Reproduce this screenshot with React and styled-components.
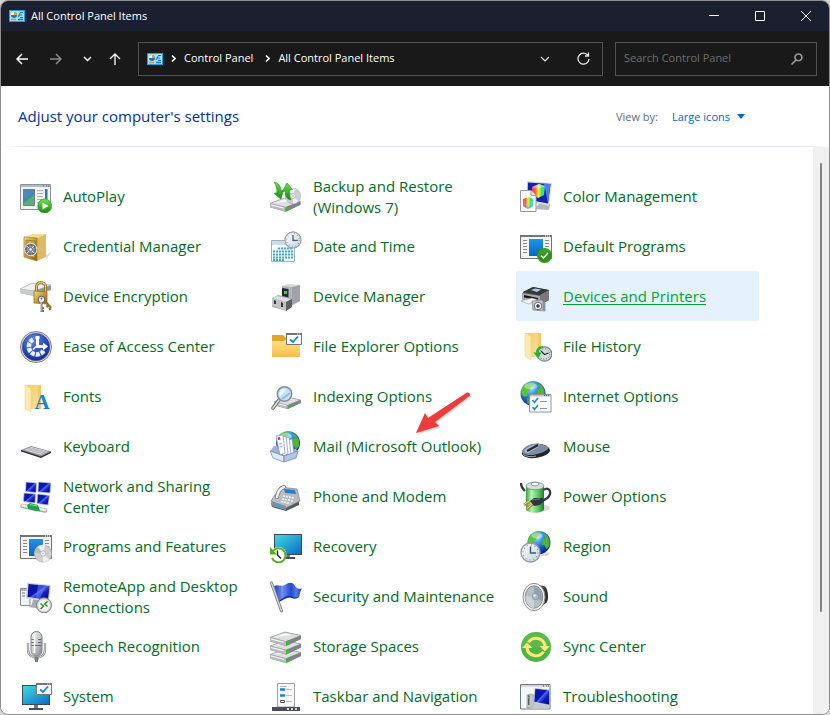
import React from "react";
import styled, { createGlobalStyle } from "styled-components";

function Defs() {
  return (
    <DefsSvg aria-hidden="true">
      <defs>
        <linearGradient id="screen" x1="0" y1="0" x2="1" y2="1">
          <stop offset="0" stopColor="#0a1a8c" />
          <stop offset="0.45" stopColor="#0d16b4" />
          <stop offset="0.5" stopColor="#4a6cf0" />
          <stop offset="0.65" stopColor="#1420c8" />
          <stop offset="1" stopColor="#02085e" />
        </linearGradient>
        <linearGradient id="teal" x1="0" y1="0" x2="1" y2="1">
          <stop offset="0" stopColor="#3fdbe3" />
          <stop offset="1" stopColor="#0a6cc4" />
        </linearGradient>
        <linearGradient id="blue" x1="0" y1="0" x2="0" y2="1">
          <stop offset="0" stopColor="#1e95e6" />
          <stop offset="1" stopColor="#0868bd" />
        </linearGradient>
        <linearGradient id="metal" x1="0" y1="0" x2="1" y2="1">
          <stop offset="0" stopColor="#f6f6f8" />
          <stop offset="0.5" stopColor="#c9cbcf" />
          <stop offset="1" stopColor="#7d8086" />
        </linearGradient>
        <linearGradient id="folder" x1="0" y1="0" x2="0" y2="1">
          <stop offset="0" stopColor="#ffe28a" />
          <stop offset="1" stopColor="#f3c04a" />
        </linearGradient>
        <linearGradient id="oldFolder" x1="0" y1="0" x2="1" y2="1">
          <stop offset="0" stopColor="#f3cd68" />
          <stop offset="1" stopColor="#fbe39a" />
        </linearGradient>
        <linearGradient id="gold" x1="0" y1="0" x2="1" y2="1">
          <stop offset="0" stopColor="#f2dc8c" />
          <stop offset="0.5" stopColor="#c79b35" />
          <stop offset="1" stopColor="#8c6518" />
        </linearGradient>
        <linearGradient id="green" x1="0" y1="0" x2="0" y2="1">
          <stop offset="0" stopColor="#6fe04c" />
          <stop offset="1" stopColor="#168a12" />
        </linearGradient>
        <linearGradient id="battery" x1="0" y1="0" x2="1" y2="0">
          <stop offset="0" stopColor="#3f9c46" />
          <stop offset="0.3" stopColor="#b4f5ae" />
          <stop offset="0.7" stopColor="#55c95a" />
          <stop offset="1" stopColor="#1f7a34" />
        </linearGradient>
        <linearGradient id="cube" x1="0" y1="0" x2="1" y2="0">
          <stop offset="0" stopColor="#ff2fd0" />
          <stop offset="0.25" stopColor="#ff5a2c" />
          <stop offset="0.5" stopColor="#fff03a" />
          <stop offset="0.75" stopColor="#3ce84c" />
          <stop offset="1" stopColor="#2ad8f0" />
        </linearGradient>
        <linearGradient id="shade" x1="0" y1="0" x2="0" y2="1">
          <stop offset="0.3" stopColor="#ffffff" stopOpacity="0" />
          <stop offset="1" stopColor="#1a6cff" stopOpacity="0.5" />
        </linearGradient>
        <linearGradient id="flagBlue" x1="0" y1="0" x2="1" y2="0">
          <stop offset="0" stopColor="#1c3ab0" />
          <stop offset="0.3" stopColor="#6f92f2" />
          <stop offset="0.6" stopColor="#2748cc" />
          <stop offset="0.8" stopColor="#5478ea" />
          <stop offset="1" stopColor="#1b38ac" />
        </linearGradient>
        <radialGradient id="globe" cx="0.38" cy="0.25" r="0.8">
          <stop offset="0" stopColor="#c4ecff" />
          <stop offset="0.35" stopColor="#3e9be6" />
          <stop offset="0.75" stopColor="#1242b4" />
          <stop offset="1" stopColor="#0a1f70" />
        </radialGradient>
        <radialGradient id="access" cx="0.4" cy="0.25" r="0.8">
          <stop offset="0" stopColor="#5f86ee" />
          <stop offset="0.6" stopColor="#2748bd" />
          <stop offset="1" stopColor="#152a85" />
        </radialGradient>
        <linearGradient id="face" x1="0" y1="0" x2="1" y2="1">
          <stop offset="0" stopColor="#ffffff" />
          <stop offset="1" stopColor="#c3d2dd" />
        </linearGradient>
        <linearGradient id="dark" x1="0" y1="0" x2="1" y2="0">
          <stop offset="0" stopColor="#7a7a7a" />
          <stop offset="1" stopColor="#232323" />
        </linearGradient>
      </defs>
    </DefsSvg>
  );
}

/* pieces shared by several icons */

const Globe = ({ cx, cy, r }) => (
  <g transform={`translate(${cx} ${cy}) scale(${r / 12})`}>
    <circle r="12" fill="url(#globe)" />
    <path d="M-10-6C-8-9-4-11-1-11L1-8-2-6-3-3-6-1-5 2-8 3-11 1C-12-2-11-5-10-6Z" fill="#5cc336" />
    <path d="M3-10 8-8 11-3 11 3 8 7 6 3 3 2 4-3 7-5Z" fill="#4fb52f" />
    <path d="M-6 4-1 5 1 8-2 11.500-6 9Z" fill="#3fa32a" />
    <ellipse cx="-2" cy="-7" rx="6" ry="3" fill="#fff" opacity="0.4" />
  </g>
);

const Clock = ({ cx, cy, r }) => (
  <g transform={`translate(${cx} ${cy}) scale(${r / 10})`}>
    <circle r="9.500" fill="url(#face)" stroke="#8e9ba6" strokeWidth="1.300" />
    <circle r="7.500" fill="none" stroke="#8496a5" strokeDasharray="1 2.927" strokeWidth="1.200" />
    <path d="M0-6V.5H5.500" fill="none" stroke="#3c5a70" strokeWidth="1.500" />
  </g>
);

const Disc = ({ cx, cy, r }) => (
  <g transform={`translate(${cx} ${cy}) scale(${r / 9})`}>
    <circle r="8.700" fill="#cfcfd1" stroke="#a9a9ab" strokeWidth="0.600" />
    <path d="M0 0-5-7A8.600 8.600 0 0 1 2-8.400ZM0 0 6 6A8.600 8.600 0 0 1 0 8.600Z" fill="#f0f0f0" />
    <path d="M0 0-8.500-1A8.600 8.600 0 0 1-5.500-6.500Z" fill="#b7b9bc" />
    <circle r="2.700" fill="#fff" stroke="#b4b4b4" />
    <circle r="1" fill="#bdbdbd" />
  </g>
);

const Drive = ({ x = 0, y = 0, s = 1 }) => (
  <g transform={`translate(${x} ${y}) scale(${s})`}>
    <path d="M0 5.500 15 0 31 3.500V7L16 14 0 9.500Z" fill="#787a7f" />
    <path d="M0 5.500 15 0 31 3.500 16 9.500Z" fill="#dedfe2" stroke="#9a9ba0" strokeWidth="0.700" />
    <path d="M3 5.300 15 1.500 22 3Z" fill="#f8f8f9" />
    <path d="M0 5.500 16 9.500V14L0 9.500Z" fill="#b9babf" />
    <path d="M16 9.500 31 3.500V7L16 14Z" fill="#808288" />
    <path d="M16 10 19 9V12L16 13.500Z" fill="#2fc520" />
    <path d="M1 7 14 10.300" stroke="#fff" strokeWidth="1" />
  </g>
);

const ProgramWindow = () => (
  <g>
    <path d="M.5 4.500H31.500V27.500H.5Z" fill="#f4f4f4" stroke="#747474" />
    <path d="M0 4H32V6H0Z" fill="#747474" />
    <path d="M25 5H26M27 5H28M29 5H30" stroke="#fff" />
    <path d="M3 9.500H7M3 12.500H7M3 15.500H7M3 18.500H7M3 21.500H7M25 9.500H29M25 12.500H29M25 15.500H29" stroke="#8a8a8a" />
    <path d="M9 8H23V25H9Z" fill="url(#blue)" />
  </g>
);

const CheckWindow = () => (
  <g>
    <path d="M16.500 2.500H31.500V13.500H16.500Z" fill="#fbfbfb" stroke="#747474" />
    <path d="M16 2H32V4H16Z" fill="#747474" />
    <path d="M27 3H28M29 3H30" stroke="#fff" strokeWidth="0.800" />
    <path d="M20 8.500 23 11 28 5.500" fill="none" stroke="#1685dd" strokeWidth="1.800" />
  </g>
);

const OldFolder = ({ y = 0 }) => (
  <g transform={`translate(0 ${y})`}>
    <path d="M6 2H21V26H9Z" fill="url(#oldFolder)" />
    <path d="M18 2H21V26H18Z" fill="#f1cb66" />
    <path d="M5 2 11 5.500V29L5 25.500Z" fill="#fdeab0" stroke="#edcf7e" strokeWidth="0.500" />
  </g>
);

/* one 32px drawing for each item of the list */

const icons = {
  autoplay: (
    <>
      <path d="M.5 3.500H30.500V28.500H.5Z" fill="#f1f3f5" stroke="#8a929b" />
      <path d="M1 4H30V6H1Z" fill="#b3bac2" />
      <path d="M23 5H24M26 5H27M28 5H29" stroke="#4c5661" strokeWidth="1" />
      <path d="M3.500 8.500H14.500V24.500H3.500Z" fill="#3d8fa0" stroke="#6c7e8a" />
      <path d="M4 9H14L4 18Z" fill="#4c86c4" />
      <path d="M4 22 14 14V24H4Z" fill="#5dab7d" />
      <path d="M17 9.500H23M17 12.500H23M17 15.500H23M17 18.500H22M17 21.500H20" stroke="#a9b0b8" />
      <path d="M25 8H27.500V18H25Z" fill="#3878a8" />
      <circle cx="24.700" cy="25" r="7" fill="url(#green)" stroke="#2b9c20" strokeWidth="0.700" />
      <path d="M22.500 21.500 28.500 25 22.500 28.500Z" fill="#fff" />
    </>
  ),
  safe: (
    <>
      <path d="M26 24 31 21 26 29Z" fill="#dcdcdc" />
      <path d="M4 6 12 3H26L17 7Z" fill="#f0dd9a" />
      <path d="M17 7 26 3V26L17 30Z" fill="#dcbb62" />
      <path d="M4 6 17 7V30L4 26Z" fill="url(#gold)" stroke="#9e7a2c" strokeWidth="0.700" />
      <path d="M6 9 15 10V27L6 24Z" fill="#c9a448" stroke="#8f6d22" strokeWidth="0.700" />
      <circle cx="10.700" cy="18.500" r="6.300" fill="#8c8f94" stroke="#dfe2e6" />
      <circle cx="10.700" cy="18.500" r="4.500" fill="none" stroke="#5f636a" strokeWidth="1.400" strokeDasharray="2.200 1.200" />
      <path d="M7 15 14 22M14 15 7 22" stroke="#fff" strokeWidth="0.900" />
      <circle cx="10.700" cy="18.500" r="1.800" fill="#e8eaec" stroke="#5b5f64" strokeWidth="0.700" />
    </>
  ),
  encryption: (
    <>
      <path d="M0 8 12 2 31 4V9L14 15 0 12Z" fill="#92949a" />
      <path d="M0 8 12 2 31 4 14 10Z" fill="#f1f1f3" stroke="#acadb1" strokeWidth="0.600" />
      <path d="M0 8 14 10V15L0 12Z" fill="#cbccd1" />
      <path d="M16.500 12V6C16.500 0 25.500 0 25.500 6V12" fill="none" stroke="#8f6a25" strokeWidth="3" />
      <path d="M16.500 12V6C16.500 0 25.500 0 25.500 6V12" fill="none" stroke="#dec474" strokeWidth="1.300" />
      <path d="M14 10 27 11V23L14 22Z" fill="url(#gold)" stroke="#91691b" strokeWidth="0.700" />
      <path d="M24 19 31 27M28.500 24.500 26.500 26M31 27 29 28.500" stroke="#9b7227" strokeWidth="2.300" />
      <circle cx="21.500" cy="18.500" r="3.200" fill="#ececef" stroke="#66696f" strokeWidth="1.100" />
      <circle cx="21.500" cy="17.500" r="1" fill="#66696f" />
      <path d="M21.500 21V31M21.500 27H24M21.500 30H24" stroke="#74777d" strokeWidth="2" />
      <path d="M21 21V30" stroke="#f3f3f3" strokeWidth="0.700" />
    </>
  ),
  access: (
    <>
      <circle cx="16" cy="16" r="15.500" fill="#e9ebee" stroke="#77797e" />
      <circle cx="16" cy="16" r="13.800" fill="url(#access)" stroke="#4d5670" strokeWidth="0.700" />
      <path d="M13 8.500A8 8 0 1 0 24 19" fill="none" stroke="#e9effc" strokeWidth="4.600" strokeDasharray="4 1" />
      <path d="M17.500 16V6M16 15.500H26" stroke="#fff" strokeWidth="3" />
      <path d="M15.500 5H19.500V8H15.500ZM23 11.500 28 15.500 23 19.500Z" fill="#fff" />
      <path d="M13 18.500 16 15.500" stroke="#fff" strokeWidth="1.500" />
    </>
  ),
  fonts: (
    <>
      <OldFolder y={2} />
      <text x="22" y="28" textAnchor="middle" fontFamily="Liberation Serif, serif" fontSize="21" fontWeight="bold" fill="#1583cf">
        A
      </text>
    </>
  ),
  keyboard: (
    <>
      <path d="M1 19 1 20.500 21 27 31 22 31 20.500Z" fill="#2f3338" />
      <path d="M1 19 11 15 31 20.500 21 25.500Z" fill="#8c9299" />
      <path d="M4 19 11.500 16 28 20.500 21 24Z" fill="#d6dade" />
      <path d="M6.500 18 23.500 23M9 17 26 21.700M8 20 15 17M12 21.200 19 18M16 22.400 23 19M20 23.500 26 20.200" stroke="#9aa1a8" strokeWidth="0.500" />
    </>
  ),
  network: (
    <>
      <path d="M6 1 16.500 2 16 11.500 5.500 10.500Z" fill="url(#screen)" stroke="#b8c4e4" strokeWidth="0.700" />
      <path d="M18.500 1 31 2 30 12 18 11Z" fill="url(#screen)" stroke="#b8c4e4" strokeWidth="0.700" />
      <path d="M4 12 15.500 13 15 22 3.500 20.500Z" fill="url(#screen)" stroke="#b8c4e4" strokeWidth="0.700" />
      <path d="M17.500 13 29.500 14.500 28 24 17 22.500Z" fill="url(#screen)" stroke="#b8c4e4" strokeWidth="0.700" />
      <path d="M2.500 25 25 29.500" stroke="#a4b3a8" strokeWidth="4.500" strokeLinecap="round" />
      <path d="M2.500 24.500 25 29" stroke="#e9efea" strokeWidth="2.500" strokeLinecap="round" />
      <path d="M7 24 10 22 18 24 20 30 16 30 8 28Z" fill="#1fa348" />
      <path d="M10 23.500 17 25" stroke="#7ee09a" strokeWidth="1.200" />
    </>
  ),
  programs: (
    <>
      <ProgramWindow />
      <Disc cx={23} cy={22.5} r={9} />
    </>
  ),
  remote: (
    <>
      <path d="M.5 7.500H10V24.500H.5Z" fill="#f2f2f2" stroke="#8a8a8a" />
      <path d="M1 9H9M2 12H5M2 15H5" stroke="#777" />
      <path d="M13 18 12 23 9 26 22 28 24 20Z" fill="#a9acb2" />
      <path d="M7 1.500 31 4 29 20.500 6 17.500Z" fill="#d3d6dc" />
      <path d="M8.500 3 29.500 5 28 18.800 7.500 16Z" fill="url(#screen)" />
      <path d="M18 4 26 4.700 20 17.500 16 17Z" fill="#7088f5" opacity="0.500" />
      <circle cx="24" cy="24.300" r="7.500" fill="#d8d8d8" stroke="#7b7b7b" />
      <circle cx="24" cy="24.300" r="5.500" fill="#f7f7f7" />
      <path d="M20.500 22.500 23.500 25 20.500 28M27.500 20.500 24.700 23 27.500 25.500" fill="none" stroke="#2c8c2c" strokeWidth="1.500" />
    </>
  ),
  speech: (
    <>
      <path d="M8 12V19C8 29 25 29 25 19V12" fill="none" stroke="#7a7b84" strokeWidth="2.200" />
      <path d="M8 12V19C8 29 25 29 25 19V12" fill="none" stroke="#eeeef2" strokeWidth="0.900" />
      <path d="M16.500 26V31M14.500 27.500H18.500" stroke="#777984" strokeWidth="3" />
      <rect x="11" y="0.500" width="11" height="24.500" rx="5.500" fill="url(#metal)" stroke="#7c7e88" />
      <path d="M11.500 8.500H15M18 8.500H21.500M11.500 11.500H15M18 11.500H21.500M11.500 14.500H21.500" stroke="#686a75" />
      <path d="M14.500 3V22" stroke="#fff" strokeWidth="1.500" />
    </>
  ),
  system: (
    <>
      <path d="M2 4H30V24H2Z" fill="#3f4852" />
      <path d="M3 5H29V23H3Z" fill="url(#teal)" />
      <path d="M14 24H18V27H14Z" fill="#6c7782" />
      <path d="M9 27H23V29H9Z" fill="#46505a" />
      <CheckWindow />
    </>
  ),
  backup: (
    <>
      <Drive x={0} y={17} s={0.98} />
      <Disc cx={23} cy={15} r={8} />
      <path d="M4 1C9 2 11 6 11 10L13.500 9 11 18 4 12.500 7 11.500C7 7 6 4 4 1Z" fill="url(#green)" stroke="#188a1a" strokeWidth="0.600" />
      <path d="M21 19C16 18 15 14 15.500 10L12.500 10.500 17 2 22.500 8.500 19.500 9C19 13 19.500 16 21 19Z" fill="url(#green)" stroke="#188a1a" strokeWidth="0.600" />
    </>
  ),
  date: (
    <>
      <path d="M1.500 9.500H24.500V30.500H1.500Z" fill="#fcfdfe" stroke="#a4adb5" />
      <path d="M2 10H24V14H2Z" fill="#c8dfe9" />
      <path d="M8 17.500H23M3 20.500H23M3 23.500H23M3 26.500H23M3 29H14" stroke="#38a9c6" strokeWidth="2" strokeDasharray="2 1" />
      <Clock cx={23} cy={9} r={8.5} />
    </>
  ),
  device: (
    <>
      <path d="M12 5 18 3 30 4V20L24 24 12 20Z" fill="#d6d7da" />
      <path d="M22 6 30 4V20L22 24Z" fill="#a0a2a7" />
      <path d="M12 5 22 6V24L12 20Z" fill="#b3b5b9" />
      <path d="M12 7 18.500 8V17L12 16Z" fill="#25282c" />
      <path d="M14 10H17V13H14Z" fill="#31da36" />
      <path d="M2 17 8 14 21 17 22 20 17 23V30L2 26Z" fill="#a5a7ac" />
      <path d="M2 17 7 15 21 18 16 21Z" fill="#dedfe2" />
      <path d="M16 21 22 18V26L16 30Z" fill="#5e6066" />
      <path d="M2 17 16 21V30L2 25Z" fill="#c1c3c7" />
      <path d="M4 19V23H6V20ZM11 21V26H13V22Z" fill="#33363b" />
    </>
  ),
  explorer: (
    <>
      <path d="M2 4H13L16 7H30V26H2Z" fill="#e2a526" />
      <path d="M2 10H14L17 8H30V26H2Z" fill="url(#folder)" />
      <CheckWindow />
    </>
  ),
  indexing: (
    <>
      <Drive x={4} y={16} s={0.86} />
      <path d="M9 19 3 27" stroke="#6b6f75" strokeWidth="3.600" strokeLinecap="round" />
      <path d="M9 19 3 27" stroke="#d3d7db" strokeWidth="1.700" strokeLinecap="round" />
      <circle cx="14.500" cy="13" r="7.200" fill="#c3e0f7" stroke="#8a919a" strokeWidth="1.600" />
      <path d="M9.500 12C10 9 13 7.500 16 8.500L10 16C9.500 15 9.300 13 9.500 12Z" fill="#eef8ff" />
      <path d="M12 18 20 12" stroke="#8bbce3" strokeWidth="2" />
    </>
  ),
  mail: (
    <>
      <Globe cx={18} cy={12} r={12} />
      <path d="M0 20 4 15 26 18 28 21 16 27Z" fill="#9eb1d2" />
      <path d="M17 9 22 8 24 22 19 25Z" fill="#f7faff" stroke="#7291c4" strokeWidth="0.700" />
      <path d="M13 7 19 6 21 23 16 25Z" fill="#fff" stroke="#7291c4" strokeWidth="0.700" />
      <path d="M9.500 6 16 5 18 23 13 25Z" fill="#fff" stroke="#7291c4" strokeWidth="0.700" />
      <path d="M6 5 13 4 15 22 10 24Z" fill="#fff" stroke="#7291c4" strokeWidth="0.700" />
      <path d="M7.500 6.500 10 6 10.500 8.500 8 9Z" fill="#dd3527" />
      <path d="M9 13 12 12.500M9.500 16 12.500 15.500" stroke="#8ba3cc" />
      <path d="M0 20 14 25V31L3 27Z" fill="#e0eafc" stroke="#6481b8" strokeWidth="0.700" />
      <path d="M14 25 28 20 26 27 14 31Z" fill="#b4c6e6" stroke="#6481b8" strokeWidth="0.700" />
    </>
  ),
  phone: (
    <>
      <path d="M1 22 13 27 29 20V24L16 30 2 26Z" fill="#54575c" />
      <path d="M1 20 10 6 27 8 30 20 16 27Z" fill="#b9bcc1" stroke="#75787e" strokeWidth="0.700" />
      <path d="M1 20 16 25V29L2 25Z" fill="#8c9096" />
      <path d="M5 23.500 14 27" stroke="#27a6e8" strokeWidth="2.300" strokeDasharray="2 1" />
      <path d="M14 8 25 9 26 13 15 12Z" fill="#267dcc" />
      <path d="M13 15 24 17M12 18 23 20M11 20.500 20 22.500" stroke="#f4f4f6" strokeWidth="1.700" strokeDasharray="2 1" />
      <path d="M7 16C8 10 11 7 14 6" fill="none" stroke="#777a80" strokeWidth="4" strokeLinecap="round" />
      <path d="M7 16C8 10 11 7 14 6" fill="none" stroke="#f2f3f5" strokeWidth="2.400" strokeLinecap="round" />
    </>
  ),
  recovery: (
    <>
      <path d="M4 3H32V24H4Z" fill="#3f4852" />
      <path d="M5 4H31V23H5Z" fill="url(#teal)" />
      <path d="M16 24H20V27H16Z" fill="#6c7782" />
      <path d="M13 26H25V28H13Z" fill="#46505a" />
      <circle cx="8.500" cy="24" r="8" fill="#fff" />
      <path d="M3 20A7 7 0 1 1 2 27" fill="none" stroke="#58ad1b" strokeWidth="2" />
      <path d="M0 16V23.500H7Z" fill="#58ad1b" />
      <path d="M7.500 19.500V24L11 27.500" fill="none" stroke="#20262b" strokeWidth="1.400" />
    </>
  ),
  flag: (
    <>
      <path d="M4 5C8 3 11 6 15 4 19 1 23 1 25 5 27 8 29 8 32 7.500 30 10 30 13 29 16 26 19 23 17 20 16 16 16 13 19 9 21Z" fill="url(#flagBlue)" />
      <path d="M9 20C13 17 17 14 21 15 25 17 27 17 29 15 28 18 24 18 20 16.500 16 16.500 13 19 9 21Z" fill="#16309a" />
      <path d="M1.500 2 11.500 30" stroke="#777a80" strokeWidth="3" strokeLinecap="round" />
      <path d="M1.500 2 11.500 30" stroke="#d4d6da" strokeWidth="1.400" strokeLinecap="round" />
    </>
  ),
  storage: (
    <>
      <Drive y={18} />
      <Drive y={9.5} />
      <Drive y={1} />
    </>
  ),
  taskbar: (
    <>
      <path d="M7.500 2.500H24.500V26H7.500Z" fill="#f8f8f8" stroke="#a1a1a1" />
      <path d="M10 5.500H17M16 8.500H22M16 14.500H22M16 20.500H22" stroke="#bababa" />
      <path d="M10 8.500H15M10 14.500H15" stroke="#1d82cf" strokeWidth="2.600" />
      <path d="M10.500 19.500H14.500V21.500H10.500Z" fill="#fff" stroke="#555" />
      <path d="M2 26H30V30H2Z" fill="#484e56" />
      <path d="M17 28H19M21 28H23M25 28H27" stroke="#fff" strokeWidth="1.500" />
    </>
  ),
  color: (
    <>
      <path d="M22 20 30 23 29 29 14 28Z" fill="#b3b6bb" />
      <path d="M7 0 32 2 29 25 6 20Z" fill="#d4d7dd" />
      <path d="M8 1.500 30.500 3 28 22.500 7.500 18.500Z" fill="#0d24ad" />
      <path d="M24 3 30.500 3 28 22.500Z" fill="#5978e8" />
      <path d="M12 6 19 3 25 5 24 14 18 17 12 13Z" fill="url(#cube)" />
      <path d="M12 6 19 3 25 5 18 8Z" fill="#fff" opacity="0.400" />
      <path d="M.5 9.500H11L16 14.500V30.500H.5Z" fill="#fbfbfb" stroke="#999" />
      <path d="M11 9.500V14.500H16" fill="#e4e4e4" stroke="#999" />
      <path d="M3 18 9 16 13 18V25L8 28 3 25Z" fill="url(#cube)" />
      <path d="M3 18 9 16 13 18V25L8 28 3 25Z" fill="url(#shade)" />
    </>
  ),
  defaults: (
    <>
      <ProgramWindow />
      <circle cx="24.500" cy="24.500" r="7.500" fill="#2d9417" />
      <path d="M17.500 24A7.500 7.500 0 0 1 31 21Z" fill="#46aa2c" opacity="0.600" />
      <path d="M21 24.500 23.500 27 28 22" fill="none" stroke="#fff" strokeWidth="1.500" />
    </>
  ),
  printers: (
    <>
      <path d="M3 11 13 6 29 9 29 19 22 23 2 18Z" fill="#53565b" />
      <path d="M3 11 13 6 29 9 20 14Z" fill="#34373b" />
      <path d="M11 9 15 7.500 21 8.500 17 11Z" fill="#a9cfe2" />
      <path d="M2 12 20 15V22L2 18Z" fill="#a6a9ae" />
      <path d="M4 14 18 17V19L4 16.500Z" fill="#17191c" />
      <path d="M1 20 12 17 18 19 9 23Z" fill="#f7f8f9" stroke="#909399" strokeWidth="0.600" />
      <path d="M20 14 29 9V19L20 23Z" fill="#777a80" />
      <path d="M12 20 22 19 25 22V30L13 29Z" fill="#c6c8cb" stroke="#77797e" strokeWidth="0.700" />
      <circle cx="18" cy="25" r="3.800" fill="#f3f4f5" stroke="#686b70" />
      <circle cx="18" cy="25" r="1.800" fill="#3a4147" />
      <path d="M22.500 20 25 22V30L22.500 29Z" fill="#8e9196" />
    </>
  ),
  history: (
    <>
      <OldFolder />
      <circle cx="24.500" cy="23" r="7.200" fill="#d5dadd" stroke="#7f868c" strokeWidth="1.300" />
      <circle cx="24.500" cy="23" r="5.300" fill="none" stroke="#6d747a" strokeDasharray="1 1.775" />
      <path d="M21 20 24.500 23.500 28.500 22" fill="none" stroke="#2b3033" strokeWidth="1.200" />
      <path d="M23 15C18 15 16 18 16 21.500H13.500L18 27.500 21.500 21.500H19C19 19 20 17.500 23 17Z" fill="#2fae35" />
    </>
  ),
  internet: (
    <>
      <Globe cx={13} cy={12.5} r={12.5} />
      <path d="M9.500 13.500H31V31H9.500Z" fill="#fbfcfd" stroke="#8d969e" />
      <path d="M10 14H31V15.500H10Z" fill="#b9c3cb" />
      <path d="M24 14.500H25M26 14.500H27M28 14.500H29" stroke="#2e5e8f" />
      <path d="M12.500 19 14.500 21.500 18 17M12.500 26 14.500 28.500 18 24" fill="none" stroke="#248dc7" strokeWidth="1.700" />
      <path d="M20 20.500H27M20 27.500H27" stroke="#8c98a8" />
    </>
  ),
  mouse: (
    <>
      <path d="M2 21C4 15 12 12 20 13 27 14 30 17 30 20 28 25 16 28 9 27 4 26 1 24 2 21Z" fill="#23272d" />
      <path d="M2 20C5 14 13 12 20 13 26 14 29 16 28 18 24 22 14 24 10 24 5 24 1 22 2 20Z" fill="#7c8da4" />
      <path d="M5 19C9 14 15 13 20 14L15 18 8 22C5 21.500 4 20.500 5 19Z" fill="#b1becd" />
      <path d="M7 20 18 14" stroke="#242a32" strokeWidth="2.200" />
      <path d="M3 23C6 26 12 26 16 25" fill="none" stroke="#aebac7" strokeWidth="0.900" />
    </>
  ),
  power: (
    <>
      <ellipse cx="24" cy="27" rx="6" ry="3" fill="#d9d9d9" />
      <path d="M6 5V28C6 33 24 33 24 28V5Z" fill="url(#battery)" />
      <ellipse cx="15" cy="5" rx="9" ry="3.800" fill="#d3e2d8" stroke="#647a70" strokeWidth="0.700" />
      <ellipse cx="15" cy="3" rx="4" ry="1.800" fill="#f8fafb" stroke="#6d7a83" strokeWidth="0.700" />
      <path d="M1 2C1 7 3 8 5 10M24 9C28 5 32 10 29 15 27 19 22 19 20 21" fill="none" stroke="#343548" strokeWidth="2.300" />
      <path d="M4 24 10 20M7 28 13 23" stroke="#b4883b" strokeWidth="2.800" />
      <path d="M4 23.500 10 19.500M7 27.500 13 22.500" stroke="#f6dca0" />
      <path d="M10 20 14 17 22 17 25 19 20 24 14 25Z" fill="#33323f" />
      <path d="M12 19 20 18" stroke="#77778a" />
    </>
  ),
  region: (
    <>
      <ellipse cx="23" cy="23" rx="7" ry="2" fill="#d9d9d9" />
      <Globe cx={19} cy={11.5} r={11.5} />
      <Clock cx={10.5} cy={21.5} r={10} />
    </>
  ),
  sound: (
    <>
      <path d="M14 3 24 5C29 7 29 21 26 22L16 29Z" fill="url(#dark)" />
      <ellipse cx="14" cy="16" rx="11" ry="13.700" fill="#f4f4f4" stroke="#8f8f8f" />
      <ellipse cx="14" cy="16" rx="8.800" ry="11.200" fill="#b4bec5" stroke="#898d91" />
      <path d="M14 5C20 5 23 12 22 20L14 16Z" fill="#93a2ac" />
      <path d="M14 27C9 27 5.500 21 5.500 15L14 16Z" fill="#ccd4d9" />
      <circle cx="15.500" cy="15.500" r="3.300" fill="#a3b9c7" stroke="#73838e" strokeWidth="0.600" />
      <circle cx="14.500" cy="14.500" r="1.300" fill="#e7f2f8" />
    </>
  ),
  sync: (
    <>
      <circle cx="16" cy="16" r="15" fill="#4fb443" />
      <path d="M1 16A15 15 0 0 1 31 16Z" fill="#62c153" opacity="0.500" />
      <path d="M8.500 11.500A9 9 0 0 1 25 15M23.500 20.500A9 9 0 0 1 7 17" fill="none" stroke="#f7e97a" strokeWidth="3.200" />
      <path d="M19.500 15H30L25 20.500ZM12.500 17H2L7 11.500Z" fill="#f7e97a" />
    </>
  ),
  trouble: (
    <>
      <path d="M.5 3.500H30V28H.5Z" fill="#f6f7f8" stroke="#6f7882" />
      <path d="M1 4H30V6H1Z" fill="#d3d8dd" />
      <path d="M23 5H24M26 5H27M28 5H29" stroke="#2e3a46" />
      <path d="M7 14 11 13 14 14V26L7 27Z" fill="#c2c5ca" stroke="#8c9096" strokeWidth="0.600" />
      <path d="M8 14 9.500 14.500V24L8 24Z" fill="#5c5f65" />
      <path d="M8 16H9.500V17.500H8Z" fill="#36d135" />
      <path d="M15 22 29 24V27.500H12Z" fill="#c5c8ce" />
      <path d="M15 7.500 29.500 9V24L14 21Z" fill="url(#screen)" stroke="#c6cad5" strokeWidth="0.600" />
    </>
  ),
};

const items = [
  ["autoplay", "AutoPlay"],
  ["backup", "Backup and Restore (Windows 7)"],
  ["color", "Color Management"],
  ["safe", "Credential Manager"],
  ["date", "Date and Time"],
  ["defaults", "Default Programs"],
  ["encryption", "Device Encryption"],
  ["device", "Device Manager"],
  ["printers", "Devices and Printers"],
  ["access", "Ease of Access Center"],
  ["explorer", "File Explorer Options"],
  ["history", "File History"],
  ["fonts", "Fonts"],
  ["indexing", "Indexing Options"],
  ["internet", "Internet Options"],
  ["keyboard", "Keyboard"],
  ["mail", "Mail (Microsoft Outlook)"],
  ["mouse", "Mouse"],
  ["network", "Network and Sharing Center"],
  ["phone", "Phone and Modem"],
  ["power", "Power Options"],
  ["programs", "Programs and Features"],
  ["recovery", "Recovery"],
  ["region", "Region"],
  ["remote", "RemoteApp and Desktop Connections"],
  ["flag", "Security and Maintenance"],
  ["sound", "Sound"],
  ["speech", "Speech Recognition"],
  ["storage", "Storage Spaces"],
  ["sync", "Sync Center"],
  ["system", "System"],
  ["taskbar", "Taskbar and Navigation"],
  ["trouble", "Troubleshooting"],
];

const PanelLogo = () => (
  <svg width="16" height="12" viewBox="0 0 16 12" aria-hidden="true">
    <path d="M0 0H16V12H0Z" fill="#1f9fe0" />
    <path d="M1 1H15V11H1Z" fill="#a5e2fa" />
    <circle cx="5" cy="5" r="3" fill="#1678c8" />
    <path d="M5 5V2A3 3 0 0 0 2 5Z" fill="#fff" />
    <path d="M5 5V2A3 3 0 0 1 8 5Z" fill="#f39a1f" />
    <path d="M11 2.500H14M10 5H13M11 7.500H14" stroke="#1a6fc0" />
    <path d="M9 7 11 3" stroke="#1a6fc0" />
    <path d="M2 9.500H7" stroke="#f28c1b" strokeWidth="1.400" />
    <path d="M9 9.500H14" stroke="#1678c8" strokeWidth="1.400" />
  </svg>
);

const Glyph = ({ d, w = 12, h = 12, stroke = 1 }) => (
  <svg width={w} height={h} viewBox={`0 0 ${w} ${h}`} fill="none" stroke="currentColor" strokeWidth={stroke} aria-hidden="true">
    <path d={d} />
  </svg>
);

const CHEVRON_RIGHT = "M1 1.500 4 4.500 1 7.500";

function App() {
  return (
    <Window>
      <GlobalStyle />
      <Defs />
      <TitleBar>
        <PanelLogo />
        <Title>All Control Panel Items</Title>
        <CaptionButton aria-label="Minimize">
          <Glyph w={10} h={10} d="M0 4.500H10" />
        </CaptionButton>
        <CaptionButton aria-label="Maximize">
          <Glyph w={10} h={10} d="M.5 .5H9.500V9.500H.5Z" />
        </CaptionButton>
        <CaptionButton aria-label="Close">
          <Glyph w={10} h={10} d="M0 0 10 10M10 0 0 10" />
        </CaptionButton>
      </TitleBar>

      <Toolbar>
        <NavButtons>
          <NavButton aria-label="Back">
            <Glyph d="M12 6H1M6 1 1 6 6 11" stroke={1.5} />
          </NavButton>
          <NavButton aria-label="Forward" disabled>
            <Glyph d="M0 6H11M6 1 11 6 6 11" stroke={1.5} />
          </NavButton>
          <NavButton aria-label="Recent locations" $narrow>
            <Glyph w={9} h={6} d="M1 1 4.500 4.500 8 1" stroke={1.5} />
          </NavButton>
          <NavButton aria-label="Up" $narrow>
            <Glyph d="M6 12V1M1 6 6 1 11 6" stroke={1.3} />
          </NavButton>
        </NavButtons>
        <AddressBar>
          <PanelLogo />
          <Glyph w={5} h={9} d={CHEVRON_RIGHT} stroke={1.6} />
          <Crumb href="#control-panel">Control Panel</Crumb>
          <Glyph w={5} h={9} d={CHEVRON_RIGHT} stroke={1.6} />
          <Crumb href="#all-items">All Control Panel Items</Crumb>
          <AddressButtons>
            <BarButton aria-label="Previous locations">
              <Glyph w={10} h={6} d="M1 1 5 5 9 1" stroke={1.2} />
            </BarButton>
            <BarButton aria-label="Refresh">
              <Glyph w={13} h={13} d="M11 3.500A5.500 5.500 0 1 0 12 7M11.500 .5V4H8" stroke={1.3} />
            </BarButton>
          </AddressButtons>
        </AddressBar>
        <SearchBox>
          <SearchInput type="text" aria-label="Search Control Panel" placeholder="Search Control Panel" />
          <BarButton aria-label="Search" $muted>
            <Glyph d="M5 7 0.500 11.500M7.500 1A3.400 3.400 0 1 1 7.400 1Z" stroke={1.6} />
          </BarButton>
        </SearchBox>
      </Toolbar>

      <Header>
        <Heading>Adjust your computer's settings</Heading>
        <ViewLabel htmlFor="view-by">View by:</ViewLabel>
        <ViewSelect id="view-by" defaultValue="large">
          <option value="large">Large icons</option>
        </ViewSelect>
        <SelectArrow viewBox="0 0 8 5" aria-hidden="true">
          <path d="M0 0H8L4 5Z" />
        </SelectArrow>
      </Header>
      <Divider />

      <Body>
        <ItemList>
          {items.map(([icon, label]) => (
            <Item key={icon}>
              <ItemLink href={`#${icon}`} $active={icon === "printers"}>
                <ItemIcon viewBox="0 0 32 32" aria-hidden="true">
                  {icons[icon]}
                </ItemIcon>
                <ItemLabel>{label}</ItemLabel>
              </ItemLink>
              {icon === "mail" && (
                <Pointer viewBox="0 0 58 44" aria-hidden="true">
                  <path d="M2 42 11 22 14 27 53 1.500Q56 1 56 4.500L21 31 25 35Z" />
                </Pointer>
              )}
            </Item>
          ))}
        </ItemList>
        <ScrollTrack>
          <ScrollThumb />
        </ScrollTrack>
      </Body>
    </Window>
  );
}

const GlobalStyle = createGlobalStyle`
  * {
    box-sizing: border-box;
  }

  body {
    margin: 0;
    background: #d5d5d1;
    font-family: "Open Sans", "Noto Sans", sans-serif;
    font-size: 12px;
  }

  button,
  input,
  select {
    font: inherit;
    border: 0;
    padding: 0;
    background: none;
  }
`;

const DefsSvg = styled.svg`
  position: absolute;
  width: 0;
  height: 0;
`;

const Window = styled.div`
  display: flex;
  flex-direction: column;
  height: 100vh;
  overflow: hidden;
  background: #fff;
  border: 1px solid #8e8e8e;
  border-radius: 8px;
`;

const TitleBar = styled.header`
  display: flex;
  align-items: center;
  flex: none;
  height: 30px;
  padding-left: 8px;
  background: #1b2030;
  color: #fff;
`;

const Title = styled.div`
  flex: 1;
  margin-left: 6px;
  padding-bottom: 2px;
  font-size: 11px;
`;

const CaptionButton = styled.button`
  display: flex;
  align-items: center;
  justify-content: center;
  width: 46px;
  height: 30px;
  color: #fff;
`;

const Toolbar = styled.nav`
  display: flex;
  align-items: center;
  flex: none;
  gap: 12px;
  height: 55px;
  padding: 0 12px 0 4px;
  background: #191919;
  color: #fff;
`;

const NavButtons = styled.div`
  display: flex;
  width: 121px;
`;

const NavButton = styled.button`
  display: flex;
  align-items: center;
  justify-content: center;
  flex: none;
  width: ${(props) => (props.$narrow ? "28px" : "34px")};
  height: 32px;
  color: #fff;

  &:disabled {
    color: #8b8b8b;
  }
`;

const AddressBar = styled.div`
  display: flex;
  align-items: center;
  flex: 1;
  gap: 8px;
  height: 34px;
  padding-left: 8px;
  border: 1px solid #535353;
`;

const Crumb = styled.a`
  padding: 0 4px 2px 0;
  color: #fff;
  font-size: 11px;
  text-decoration: none;
  white-space: nowrap;
`;

const AddressButtons = styled.div`
  display: flex;
  margin-left: auto;
`;

const BarButton = styled.button`
  display: flex;
  align-items: center;
  justify-content: center;
  width: 38px;
  height: 32px;
  color: ${(props) => (props.$muted ? "#9b9b9b" : "#e6e6e6")};
`;

const SearchBox = styled.div`
  display: flex;
  align-items: center;
  width: 202px;
  height: 34px;
  padding-left: 8px;
  border: 1px solid #535353;
`;

const SearchInput = styled.input`
  flex: 1;
  min-width: 0;
  padding-bottom: 2px;
  color: #fff;
  font-size: 11px;
  outline: none;

  &::placeholder {
    color: #6f6f6f;
    opacity: 1;
  }
`;

const Header = styled.div`
  display: flex;
  align-items: center;
  flex: none;
  height: 60px;
  padding: 0 84px 0 17px;
`;

const Heading = styled.h1`
  flex: 1;
  margin: 0;
  color: #003399;
  font-size: 15px;
  font-weight: 400;
`;

const ViewLabel = styled.label`
  margin-right: 14px;
  color: #5f6b78;
  font-size: 11px;
`;

const ViewSelect = styled.select`
  appearance: none;
  field-sizing: content;
  color: #0066cc;
  font-size: 11px;
`;

const SelectArrow = styled.svg`
  width: 8px;
  height: 5px;
  margin-left: 7px;
  fill: #0066cc;
`;

const Divider = styled.div`
  flex: none;
  height: 1px;
  background: linear-gradient(to right, #fff, #d5e5f2 4%, #d5e5f2 96%, #fff);
`;

const Body = styled.main`
  display: flex;
  flex: 1;
  min-height: 0;
`;

const ItemList = styled.ul`
  display: grid;
  grid-template-columns: repeat(auto-fill, 243px);
  grid-auto-rows: 50px;
  column-gap: 7px;
  flex: 1;
  margin: 0;
  padding: 24px 0 24px 15px;
  overflow-y: auto;
  scrollbar-width: none;
  list-style: none;
`;

const Item = styled.li`
  position: relative;
`;

const ItemLink = styled.a`
  display: flex;
  align-items: center;
  gap: 11px;
  height: 50px;
  padding: 10px 4px 8px;
  border-radius: 2px;
  background: ${(props) => (props.$active ? "#e5f2fe" : "transparent")};
  color: ${(props) => (props.$active ? "#00a62b" : "#006e1d")};
  font-size: 15px;
  line-height: 21px;
  text-decoration: ${(props) => (props.$active ? "underline" : "none")};
  text-underline-offset: 2px;
`;

const ItemIcon = styled.svg`
  flex: none;
  width: 32px;
  height: 32px;
`;

const ItemLabel = styled.span`
  padding-bottom: 1px;
`;

/* red marker laid over the list, aimed at the Mail item */
const Pointer = styled.svg`
  position: absolute;
  top: -30px;
  left: 148px;
  width: 58px;
  height: 44px;
  fill: #ee3b3b;
  filter: drop-shadow(1px 1px 1px rgba(0, 0, 0, 0.25));
  pointer-events: none;
`;

const ScrollTrack = styled.div`
  display: flex;
  justify-content: center;
  flex: none;
  width: 16px;
  padding: 16px 0;
  background: #f0f0f0;
`;

const ScrollThumb = styled.div`
  width: 2px;
  height: 84%;
  border-radius: 1px;
  background: #858585;
`;

export default App;
